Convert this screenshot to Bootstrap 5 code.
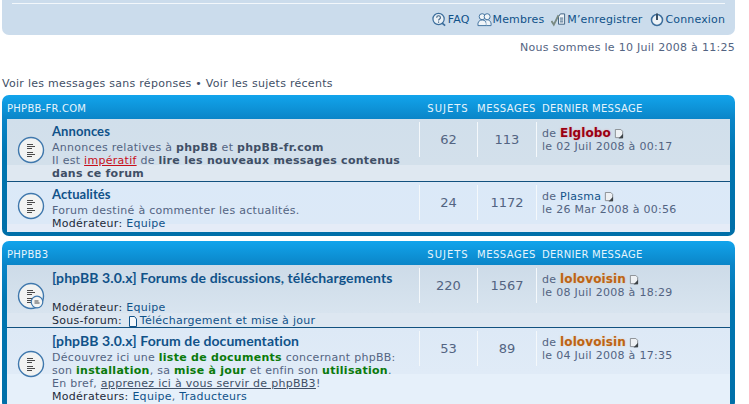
<!DOCTYPE html>
<html lang="fr">
<head>
<meta charset="UTF-8">
<title>phpBB-fr.com</title>
<link href="https://cdn.jsdelivr.net/npm/bootstrap@5.3.0/dist/css/bootstrap.min.css" rel="stylesheet">
<style>
    html, body {
        height: 404px;
        overflow: hidden;
    }

    body {
        background: #fff;
        color: #536482;
        font-family: "DejaVu Sans", Verdana, sans-serif;
        font-size: 11px;
        letter-spacing: .28px;
        line-height: 13px;
        width: 735px;
        padding-left: 2px;
    }

    a {
        color: #105289;
        text-decoration: none;
    }

    .top-panel {
        height: 35px;
        background: #cbdcec;
        border-radius: 0 0 7px 7px;
        padding: 3px 10px 0;
    }

    .top-rule {
        height: 1px;
        background: #f2f7fb;
        margin-bottom: 8px;
    }

    .top-links {
        gap: 7px;
        letter-spacing: .14px;
    }

    .top-links a {
        display: flex;
        align-items: center;
        gap: 1px;
    }

    .date-line {
        height: 13px;
        margin-top: 6px;
        margin-bottom: 23px;
        text-align: right;
    }

    .quick-line {
        height: 12px;
        margin-bottom: 6px;
        color: #3f4f66;
    }

    .quick-line a {
        color: #3f4f66;
    }

    .forum-box {
        background: linear-gradient(#12a4ec 0, #0a85c8 24px, #0076b1 60px, #006fa8 100%);
        border-radius: 7px;
        padding: 0 5px 4px;
        margin-bottom: 5px;
    }

    .box-head {
        height: 24px;
        color: #e6f4fc;
        font-size: 10px;
        text-transform: uppercase;
        align-items: center;
        padding-top: 3px;
    }

    .head-title {
        flex: 1;
    }

    .col-topics {
        width: 58px;
        flex: none;
        text-align: center;
    }

    .col-posts {
        width: 59px;
        flex: none;
        text-align: center;
    }

    .col-last {
        width: 194px;
        flex: none;
        padding-left: 6px;
    }

    .head-topics {
        letter-spacing: 1px;
    }

    .head-posts {
        letter-spacing: .5px;
    }

    .forum-row + .forum-row {
        border-top: 1px solid #11517f;
    }

    .row-a {
        background: linear-gradient(#d1dfeb 0, #d3e0eb 46px, #dfe8f1 46px);
        padding-bottom: 1px;
    }

    .row-b {
        background: linear-gradient(#dbe9f8 0, #dce9f7 42px, #e5ecf7 42px);
        padding-bottom: 2px;
    }

    .row-c {
        background: linear-gradient(#cddbe8 0, #d8e4ef 48px, #dde7f1 48px);
    }

    .row-d {
        background: linear-gradient(#dde9f6 0, #e0ebf7 46px, #e6f0fa 46px);
        padding-bottom: 2px;
    }

    .forum-icon {
        width: 45px;
        flex: none;
        padding-left: 10px;
        align-self: center;
    }

    .row-d .forum-icon {
        padding-bottom: 4px;
    }

    .forum-main {
        flex: 1;
        min-width: 0;
        padding-top: 3px;
    }

    .row-c .forum-main, .row-d .forum-main {
        padding-top: 4px;
    }

    .forum-title {
        display: block;
        height: 19px;
        font-family: Lato, sans-serif;
        font-size: 14px;
        font-weight: 700;
        letter-spacing: .08px;
        line-height: 18px;
        white-space: nowrap;
    }

    .forum-title.short-title {
        font-size: 13px;
    }

    .forum-main strong, .last-info strong {
        font-weight: 700;
    }

    .dim-strong {
        color: #3f4f66;
    }

    .green-strong {
        color: #0b7a0b;
    }

    .red-link {
        color: #c80f1a;
        text-decoration: underline;
    }

    .plain-link {
        color: #3f4f66;
        text-decoration: underline;
    }

    .dark-label {
        color: #1d2b3a;
    }

    .sub-icon {
        margin-left: 2px;
        margin-right: 2px;
    }

    .stat-cell {
        height: 35px;
        margin-top: 3px;
        border-left: 1px solid #f4f8fb;
        font-size: 13px;
        letter-spacing: 0;
        line-height: 35px;
        text-align: center;
    }

    .last-info {
        height: 35px;
        margin-top: 3px;
        padding-top: 5px;
        border-left: 1px solid #f4f8fb;
        padding-left: 5px;
        white-space: nowrap;
    }

    .latest-icon {
        margin-left: -1px;
    }

    .user-red {
        color: #9a0012;
        font-size: 12px;
        letter-spacing: .1px;
        text-shadow: 0 0 2px rgba(225, 130, 140, .6);
    }

    .user-orange {
        color: #bd6414;
        font-size: 12px;
        letter-spacing: .1px;
        text-shadow: 0 0 2px rgba(235, 180, 120, .5);
    }
</style>
</head>
<body>
    <svg width="0" height="0" class="d-block">
        <symbol id="read" viewBox="0 0 28 28">
            <circle cx="14" cy="14" r="12.5" fill="#f2f3f2" stroke="#3f78ad" stroke-width="1.4"/>
            <path d="M10 8.500h6M10 10.500h8M10 12.500h5M10 16.500h6M10 18.500h8M10 20.500h5" stroke="#4a4a4a" stroke-width="1.1"/>
        </symbol>
        <symbol id="subs" viewBox="0 0 28 28">
            <circle cx="14" cy="14" r="12.5" fill="#f2f3f2" stroke="#3f78ad" stroke-width="1.4"/>
            <path d="M10 8.500h6M10 10.500h8M10 12.500h5M10 16.500h6M10 18.500h5M10 20.500h4" stroke="#4a4a4a" stroke-width="1.1"/>
            <circle cx="20" cy="20" r="5.800" fill="#f4f5f4" stroke="#3f78ad" stroke-width="1.2"/>
            <path d="M17.500 19h4M17.500 21h5" stroke="#4a4a4a" stroke-width="1"/>
        </symbol>
        <symbol id="latest" viewBox="0 0 11 11">
            <path d="M1.500 .5h6l2 2v7h-8z" fill="#eef1f4" stroke="#85898d"/>
            <path d="M5 10.500l5-.2v-5z" fill="#3d4347"/>
        </symbol>
    </svg>

    <div class="top-panel">
        <div class="top-rule"></div>
        <div class="top-links d-flex justify-content-end">
            <a href="#">
                <svg width="15" height="15" viewBox="0 0 16 15"><circle cx="7" cy="7" r="6" fill="#eaf1f7" stroke="#3c6e9c" stroke-width="1.3"/><path d="M10.500 11l3.500 3" stroke="#3c6e9c" stroke-width="1.8"/><path d="M5 5.500c0-2.600 4-2.600 4 0 0 1.500-2 1.300-2 3" fill="none" stroke="#3c5f80" stroke-width="1.2"/><path d="M7 9.700v1.300" stroke="#3c5f80" stroke-width="1.2"/></svg>
                FAQ
            </a>
            <a href="#">
                <svg width="15" height="15" viewBox="0 0 16 15"><circle cx="5.500" cy="4.500" r="3.200" fill="#f0f5f9" stroke="#3c6e9c"/><circle cx="10.800" cy="4.500" r="3.200" fill="#f0f5f9" stroke="#3c6e9c"/><path d="M1 14c-.5-4 1.500-6 4.500-6s5 2 4.500 6z" fill="#f0f5f9" stroke="#3c6e9c"/><path d="M10 8c3-.6 5.500 1.500 5 6h-5" fill="#f0f5f9" stroke="#3c6e9c"/></svg>
                Membres
            </a>
            <a href="#">
                <svg width="15" height="15" viewBox="0 0 16 15"><path d="M8 4.500l2-3h4.500v11H8z" fill="#eef3f7" stroke="#3c5f80"/><path d="M9.500 6h3.500M9.500 8h3.500M9.500 10h3.500" stroke="#3c5f80"/><path d="M.5 9l2.500 4 5-10" fill="none" stroke="#7a8a82" stroke-width="2"/></svg>
                M’enregistrer
            </a>
            <a href="#">
                <svg width="15" height="15" viewBox="0 0 15 15"><circle cx="7" cy="8" r="5.500" fill="#eef3f7" stroke="#3c6e9c" stroke-width="1.5"/><path d="M7 1.500v6.500" stroke="#3a4f63" stroke-width="2"/></svg>
                Connexion
            </a>
        </div>
    </div>

    <div class="date-line">Nous sommes le 10 Juil 2008 à 11:25</div>
    <div class="quick-line"><a href="#">Voir les messages sans réponses</a> • <a href="#">Voir les sujets récents</a></div>

    <div class="forum-box">
        <div class="box-head d-flex">
            <div class="head-title">phpBB-fr.com</div>
            <div class="col-topics head-topics">Sujets</div>
            <div class="col-posts head-posts">Messages</div>
            <div class="col-last">Dernier message</div>
        </div>
        <div class="forum-row row-a d-flex">
            <div class="forum-icon"><svg width="28" height="28" class="d-block"><use href="#read"/></svg></div>
            <div class="forum-main">
                <a href="#" class="forum-title short-title">Annonces</a>
                Annonces relatives à <strong class="dim-strong">phpBB</strong> et <strong class="dim-strong">phpBB-fr.com</strong><br>
                Il est <a href="#" class="red-link">impératif</a> de <strong class="dim-strong">lire les nouveaux messages contenus dans ce forum</strong>
            </div>
            <div class="col-topics stat-cell">62</div>
            <div class="col-posts stat-cell">113</div>
            <div class="col-last last-info">
                de <a href="#" class="user-red"><strong>Elglobo</strong></a>
                <svg width="10" height="10" class="latest-icon"><use href="#latest"/></svg><br>
                le 02 Juil 2008 à 00:17
            </div>
        </div>
        <div class="forum-row row-b d-flex">
            <div class="forum-icon"><svg width="28" height="28" class="d-block"><use href="#read"/></svg></div>
            <div class="forum-main">
                <a href="#" class="forum-title short-title">Actualités</a>
                Forum destiné à commenter les actualités.<br>
                <span class="dark-label">Modérateur:</span> <a href="#">Equipe</a>
            </div>
            <div class="col-topics stat-cell">24</div>
            <div class="col-posts stat-cell">1172</div>
            <div class="col-last last-info">
                de <a href="#">Plasma</a>
                <svg width="10" height="10" class="latest-icon"><use href="#latest"/></svg><br>
                le 26 Mar 2008 à 00:56
            </div>
        </div>
    </div>

    <div class="forum-box">
        <div class="box-head d-flex">
            <div class="head-title">phpBB3</div>
            <div class="col-topics head-topics">Sujets</div>
            <div class="col-posts head-posts">Messages</div>
            <div class="col-last">Dernier message</div>
        </div>
        <div class="forum-row row-c d-flex">
            <div class="forum-icon"><svg width="28" height="28" class="d-block"><use href="#subs"/></svg></div>
            <div class="forum-main">
                <a href="#" class="forum-title">[phpBB 3.0.x] Forums de discussions, téléchargements</a>
                <br>
                <span class="dark-label">Modérateur:</span> <a href="#">Equipe</a><br>
                <span class="dark-label">Sous-forum:</span>
                <a href="#"><svg width="10" height="11" viewBox="0 0 10 11" class="sub-icon"><path d="M1.500 .5h5l2 2.500v7.500h-7z" fill="#f4f8fb" stroke="#105289"/></svg>Téléchargement et mise à jour</a>
            </div>
            <div class="col-topics stat-cell">220</div>
            <div class="col-posts stat-cell">1567</div>
            <div class="col-last last-info">
                de <a href="#" class="user-orange"><strong>lolovoisin</strong></a>
                <svg width="10" height="10" class="latest-icon"><use href="#latest"/></svg><br>
                le 08 Juil 2008 à 18:29
            </div>
        </div>
        <div class="forum-row row-d d-flex">
            <div class="forum-icon"><svg width="28" height="28" class="d-block"><use href="#read"/></svg></div>
            <div class="forum-main">
                <a href="#" class="forum-title">[phpBB 3.0.x] Forum de documentation</a>
                Découvrez ici une <strong class="green-strong">liste de documents</strong> concernant phpBB:<br>
                son <strong class="green-strong">installation</strong>, sa <strong class="green-strong">mise à jour</strong> et enfin son <strong class="green-strong">utilisation</strong>.<br>
                En bref, <a href="#" class="plain-link">apprenez ici à vous servir de phpBB3</a>!<br>
                <span class="dark-label">Modérateurs:</span> <a href="#">Equipe</a>, <a href="#">Traducteurs</a>
            </div>
            <div class="col-topics stat-cell">53</div>
            <div class="col-posts stat-cell">89</div>
            <div class="col-last last-info">
                de <a href="#" class="user-orange"><strong>lolovoisin</strong></a>
                <svg width="10" height="10" class="latest-icon"><use href="#latest"/></svg><br>
                le 04 Juil 2008 à 17:35
            </div>
        </div>
    </div>

    <script src="https://cdn.jsdelivr.net/npm/bootstrap@5.3.0/dist/js/bootstrap.bundle.min.js"></script>
</body>
</html>
